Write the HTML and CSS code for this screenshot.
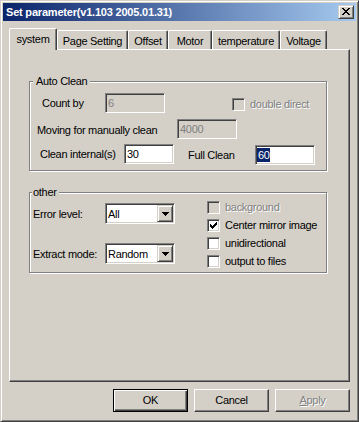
FILE: index.html
```html
<!DOCTYPE html>
<html lang="en">
<head>
    <meta charset="UTF-8">
    <title>Set parameter</title>
    <link rel="stylesheet" href="styles.css">
</head>
<body>

<div class="window">
    <!-- title bar -->
    <div class="titlebar">
        <span class="title">Set parameter(v1.103 2005.01.31)</span>
        <span class="close-btn">
            <svg width="8" height="7" viewBox="0 0 8 7" shape-rendering="crispEdges">
                <path fill="#000" d="M0 0h2v1H0z M6 0h2v1H6z M1 1h2v1H1z M5 1h2v1H5z M2 2h4v1H2z M3 3h2v1H3z M2 4h4v1H2z M1 5h2v1H1z M5 5h2v1H5z M0 6h2v1H0z M6 6h2v1H6z"/>
            </svg>
        </span>
    </div>

    <div class="dialog">
        <!-- tabs -->
        <div class="tabs">
            <div class="tab active tab-system">system</div>
            <div class="tab tab-page">Page Setting</div>
            <div class="tab tab-offset">Offset</div>
            <div class="tab tab-motor">Motor</div>
            <div class="tab tab-temp">temperature</div>
            <div class="tab tab-volt">Voltage</div>
        </div>

        <div class="panel">
            <!-- Auto Clean -->
            <div class="group group-auto">
                <span class="legend">Auto Clean</span>

                <div class="row row-1">
                    <span class="lbl lbl-count">Count by</span>
                    <div class="edit disabled w60">6</div>
                    <span class="check disabled chk-double"></span>
                    <span class="check-text disabled">double direct</span>
                </div>

                <div class="row row-2">
                    <span class="lbl lbl-moving">Moving for manually clean</span>
                    <div class="edit disabled w60">4000</div>
                </div>

                <div class="row row-3">
                    <span class="lbl lbl-clean">Clean internal(s)</span>
                    <div class="edit w50">30</div>
                    <span class="lbl lbl-full">Full Clean</span>
                    <div class="edit w60 edit-low"><span class="selected">60</span></div>
                </div>
            </div>

            <!-- other -->
            <div class="group group-other">
                <span class="legend legend-other">other</span>

                <div class="columns">
                    <div class="col-left">
                        <div class="row row-error">
                            <span class="lbl lbl-sel">Error level:</span>
                            <div class="combo">
                                <span class="combo-text">All</span>
                                <span class="combo-btn">
                                    <svg width="7" height="4" viewBox="0 0 7 4" shape-rendering="crispEdges"><path fill="#000" d="M0 0h7v1H0z M1 1h5v1H1z M2 2h3v1H2z M3 3h1v1H3z"/></svg>
                                </span>
                            </div>
                        </div>
                        <div class="row row-extract">
                            <span class="lbl lbl-sel">Extract mode:</span>
                            <div class="combo">
                                <span class="combo-text">Random</span>
                                <span class="combo-btn">
                                    <svg width="7" height="4" viewBox="0 0 7 4" shape-rendering="crispEdges"><path fill="#000" d="M0 0h7v1H0z M1 1h5v1H1z M2 2h3v1H2z M3 3h1v1H3z"/></svg>
                                </span>
                            </div>
                        </div>
                    </div>

                    <div class="col-right">
                        <div class="check-row">
                            <span class="check disabled"></span>
                            <span class="check-text disabled">background</span>
                        </div>
                        <div class="check-row">
                            <span class="check">
                                <svg width="7" height="7" viewBox="0 0 7 7" shape-rendering="crispEdges"><path fill="#000" d="M0 2h1v3H0z M1 3h1v3H1z M2 4h1v3H2z M3 3h1v3H3z M4 2h1v3H4z M5 1h1v3H5z M6 0h1v3H6z"/></svg>
                            </span>
                            <span class="check-text">Center mirror image</span>
                        </div>
                        <div class="check-row">
                            <span class="check"></span>
                            <span class="check-text">unidirectional</span>
                        </div>
                        <div class="check-row">
                            <span class="check"></span>
                            <span class="check-text">output to files</span>
                        </div>
                    </div>
                </div>
            </div>
        </div>

        <!-- dialog buttons -->
        <div class="buttons">
            <div class="btn default">OK</div>
            <div class="btn">Cancel</div>
            <div class="btn disabled"><u>A</u>pply</div>
        </div>
    </div>
</div>

</body>
</html>
```

FILE: styles.css
```css
* {
    box-sizing: border-box;
}
body {
    margin: 0;
    font-family: "Liberation Sans", Arial, sans-serif;
    font-size: 11px;
    letter-spacing: -0.3px;
    color: #000;
    background-color: #d4d0c8;
}
.window {
    width: 359px;
    height: 422px;
    background-color: #d4d0c8;
    border: 1px solid;
    border-color: #d4d0c8 #404040 #404040 #d4d0c8;
    box-shadow: inset 1px 1px #fff, inset -1px -1px #808080;
    padding: 2px;
}

/* title bar */
.titlebar {
    height: 18px;
    display: flex;
    align-items: center;
    background: linear-gradient(to right, #0a246a, #a6caf0);
    padding-left: 3px;
}
.title {
    flex: 1;
    color: #fff;
    font-weight: bold;
    font-size: 11px;
    letter-spacing: -0.2px;
    line-height: 18px;
}
.close-btn {
    display: block;
    width: 16px;
    height: 14px;
    margin-right: 2px;
    padding: 2px 0 0 3px;
    border: 1px solid;
    border-color: #d4d0c8 #404040 #404040 #d4d0c8;
    box-shadow: inset 1px 1px #fff, inset -1px -1px #808080;
    background-color: #d4d0c8;
}
.close-btn svg {
    display: block;
}

.dialog {
    padding: 0 6px;
}

/* tabs */
.tabs {
    display: flex;
    align-items: flex-end;
    height: 21px;
    margin-top: 7px;
}
.tab {
    height: 19px;
    padding-top: 3px;
    line-height: 14px;
    text-align: center;
    border: 1px solid;
    border-bottom: none;
    border-color: #fff #404040 #fff #fff;
    border-radius: 2px 2px 0 0;
    box-shadow: inset -1px 0 #808080;
    background-color: #d4d0c8;
}
.tab.active {
    height: 22px;
    margin-bottom: -1px;
    padding-top: 3px;
    position: relative;
    z-index: 1;
}
.tab-system { width: 48px; }
.tab-page { width: 71px; }
.tab-offset { width: 40px; }
.tab-motor { width: 44px; }
.tab-temp { width: 68px; }
.tab-volt { width: 47px; }

.panel {
    height: 333px;
    border: 1px solid;
    border-color: #fff #404040 #404040 #fff;
    box-shadow: inset -1px -1px #808080;
    overflow: hidden;
}

/* group boxes */
.group {
    width: 298px;
    margin-left: 19px;
    border: 1px solid #808080;
    box-shadow: inset 1px 1px #fff, 1px 1px #fff;
}
.group-auto {
    height: 90px;
    margin-top: 31px;
}
.group-other {
    height: 81px;
    margin-top: 21px;
}
.legend {
    display: block;
    width: fit-content;
    margin: -7px 0 0 3px;
    padding: 0 3px;
    line-height: 13px;
    background-color: #d4d0c8;
}
.legend-other {
    margin-left: 2px;
    padding: 0 2px 0 1px;
}

.row {
    display: flex;
    align-items: flex-start;
    height: 20px;
}
.row-1 { margin-top: 5px; }
.row-2 { margin-top: 6px; }
.row-3 { margin-top: 5px; }

.lbl {
    line-height: 20px;
    white-space: nowrap;
}
.lbl-count { margin-left: 12px; width: 63px; }
.lbl-moving { margin-left: 7px; width: 140px; line-height: 22px; }
.lbl-clean { margin-left: 10px; width: 84px; }
.lbl-full { margin-left: 14px; width: 67px; line-height: 22px; }

/* edit boxes */
.edit {
    height: 20px;
    padding: 0 2px;
    line-height: 18px;
    background-color: #fff;
    border: 1px solid;
    border-color: #808080 #fff #fff #808080;
    box-shadow: inset 1px 1px #404040, inset -1px -1px #d4d0c8;
}
.w60 { width: 60px; }
.w50 { width: 50px; }
.edit-low { margin-top: 1px; }
.selected {
    display: inline-block;
    line-height: 14px;
    margin-top: 2px;
    padding: 0 0 0 1px;
    margin-left: -1px;
    background-color: #0a246a;
    color: #fff;
}

/* check boxes */
.check {
    display: block;
    flex: none;
    width: 13px;
    height: 13px;
    padding: 2px;
    background-color: #fff;
    border: 1px solid;
    border-color: #808080 #fff #fff #808080;
    box-shadow: inset 1px 1px #404040, inset -1px -1px #d4d0c8;
}
.check svg {
    display: block;
}
.check-text {
    margin-left: 5px;
    line-height: 13px;
    white-space: nowrap;
}
.disabled {
    color: #808080;
    text-shadow: 1px 1px 0 #fff;
}
.check.disabled {
    background-color: #d4d0c8;
}
.edit.disabled {
    background-color: #d4d0c8;
    text-shadow: none;
}
.chk-double {
    margin: 5px 0 0 67px;
}
.row-1 .check-text {
    margin-top: 5px;
}

/* other group */
.columns {
    display: flex;
}
.col-left {
    width: 177px;
}
.row-error {
    height: 21px;
    margin-top: 4px;
}
.row-extract {
    height: 21px;
    margin-top: 19px;
}
.lbl-sel {
    margin-left: 3px;
    width: 72px;
    line-height: 22px;
}
.combo {
    display: flex;
    width: 70px;
    height: 21px;
    background-color: #fff;
    border: 1px solid;
    border-color: #808080 #fff #fff #808080;
    box-shadow: inset 1px 1px #404040, inset -1px -1px #d4d0c8;
}
.combo-text {
    flex: 1;
    padding-left: 2px;
    line-height: 20px;
}
.combo-btn {
    display: block;
    width: 16px;
    height: 17px;
    margin: 1px 1px 0 0;
    padding: 6px 0 0 4px;
    background-color: #d4d0c8;
    border: 1px solid;
    border-color: #d4d0c8 #404040 #404040 #d4d0c8;
    box-shadow: inset 1px 1px #fff, inset -1px -1px #808080;
}
.combo-btn svg {
    display: block;
}
.col-right {
    margin-top: 2px;
}
.check-row {
    display: flex;
    align-items: flex-start;
    height: 18px;
}

/* buttons */
.buttons {
    display: flex;
    justify-content: flex-end;
    gap: 6px;
    margin-top: 7px;
}
.btn {
    width: 75px;
    height: 23px;
    line-height: 21px;
    text-align: center;
    border: 1px solid;
    border-color: #fff #404040 #404040 #fff;
    box-shadow: inset -1px -1px #808080;
}
.btn.default {
    border-color: #000;
    box-shadow: inset 1px 1px #fff, inset -1px -1px #404040, inset -2px -2px #808080;
}
```
